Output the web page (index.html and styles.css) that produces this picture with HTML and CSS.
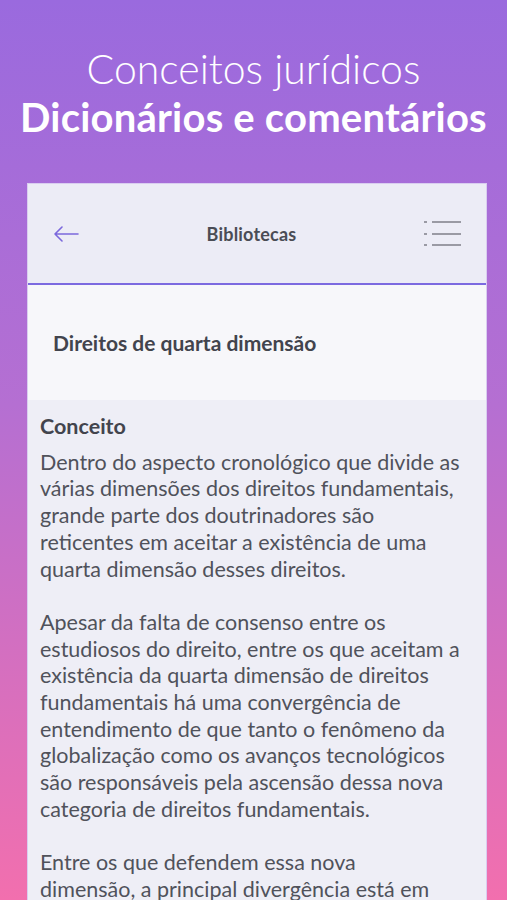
FILE: index.html
```html
<!DOCTYPE html>
<html lang="pt">
<head>
  <meta charset="UTF-8" />
  <meta name="viewport" content="width=device-width, initial-scale=1.0" />
  <title>Conceitos jurídicos</title>
  <link rel="stylesheet" href="styles.css">
</head>
<body>
  <header class="promo">
    <h1>Conceitos jurídicos</h1>
    <h2>Dicionários e comentários</h2>
  </header>

  <main class="phone">
    <nav class="topbar">
      <svg class="back" width="26" height="16" viewBox="0 0 26 16">
        <path d="M25 8H2M9 1L2 8l7 7" fill="none" stroke="#7b68dc" stroke-width="1.6" stroke-linecap="round" stroke-linejoin="round"/>
      </svg>
      <span class="topbar-title">Bibliotecas</span>
      <svg class="menu" width="38" height="30" viewBox="0 0 38 30">
        <g fill="#9a9aa4">
          <rect x="0" y="2" width="3" height="2"/>
          <rect x="0" y="14" width="3" height="2"/>
          <rect x="0" y="25" width="3" height="2"/>
        </g>
        <g stroke="#9a9aa4" stroke-width="2">
          <line x1="8" y1="3" x2="37" y2="3"/>
          <line x1="8" y1="15" x2="37" y2="15"/>
          <line x1="8" y1="26" x2="37" y2="26"/>
        </g>
      </svg>
    </nav>

    <section class="entry-head">
      <h3>Direitos de quarta dimensão</h3>
    </section>

    <article class="entry-body">
      <h4>Conceito</h4>
      <p>Dentro do aspecto cronológico que divide as<br>
        várias dimensões dos direitos fundamentais,<br>
        grande parte dos doutrinadores são<br>
        reticentes em aceitar a existência de uma<br>
        quarta dimensão desses direitos.</p>
      <p>Apesar da falta de consenso entre os<br>
        estudiosos do direito, entre os que aceitam a<br>
        existência da quarta dimensão de direitos<br>
        fundamentais há uma convergência de<br>
        entendimento de que tanto o fenômeno da<br>
        globalização como os avanços tecnológicos<br>
        são responsáveis pela ascensão dessa nova<br>
        categoria de direitos fundamentais.</p>
      <p>Entre os que defendem essa nova<br>
        dimensão, a principal divergência está em</p>
    </article>
  </main>
</body>
</html>
```

FILE: styles.css
```css
html, body {
  height: 100%;
}

body {
  margin: 0;
  overflow: hidden;
  font-family: 'Lato', 'Open Sans', sans-serif;
  background: linear-gradient(180deg, #9a6ade 0%, #b56fd2 45%, #f26fae 100%);
  color: #50525b;
}

.promo {
  padding-top: 45px;
  text-align: center;
  color: #fff;
}

.promo h1 {
  margin: 0;
  font-size: 41px;
  font-weight: 300;
  line-height: 48px;
}

.promo h2 {
  margin: 0;
  font-size: 40px;
  font-weight: 700;
  letter-spacing: 0.2px;
  line-height: 48px;
}

.phone {
  margin: 42px 20px 0 27px;
  border: 1px solid #d9cdf0;
  border-bottom: none;
  background: #eeeef6;
}

.topbar {
  display: flex;
  align-items: center;
  justify-content: space-between;
  height: 99px;
  padding: 0 24px 0 25px;
  background: #ececf6;
  border-bottom: 2px solid #7c6ae0;
}

.topbar-title {
  font-size: 18px;
  font-weight: 700;
  letter-spacing: 0.2px;
  color: #4a4c55;
}

.entry-head {
  height: 115px;
  display: flex;
  align-items: center;
  padding-left: 25px;
  background: #f7f7fa;
}

.entry-head h3 {
  margin: 0;
  font-size: 21px;
  font-weight: 700;
  color: #42444d;
}

.entry-body {
  padding: 13px 4px 0 12px;
  font-size: 21.5px;
  line-height: 26.7px;
  white-space: nowrap;
}

.entry-body h4 {
  margin: 0 0 9px 0;
  font-size: 21.5px;
  font-weight: 700;
  color: #42444d;
}

.entry-body p {
  margin: 0 0 26.7px 0;
}
```
